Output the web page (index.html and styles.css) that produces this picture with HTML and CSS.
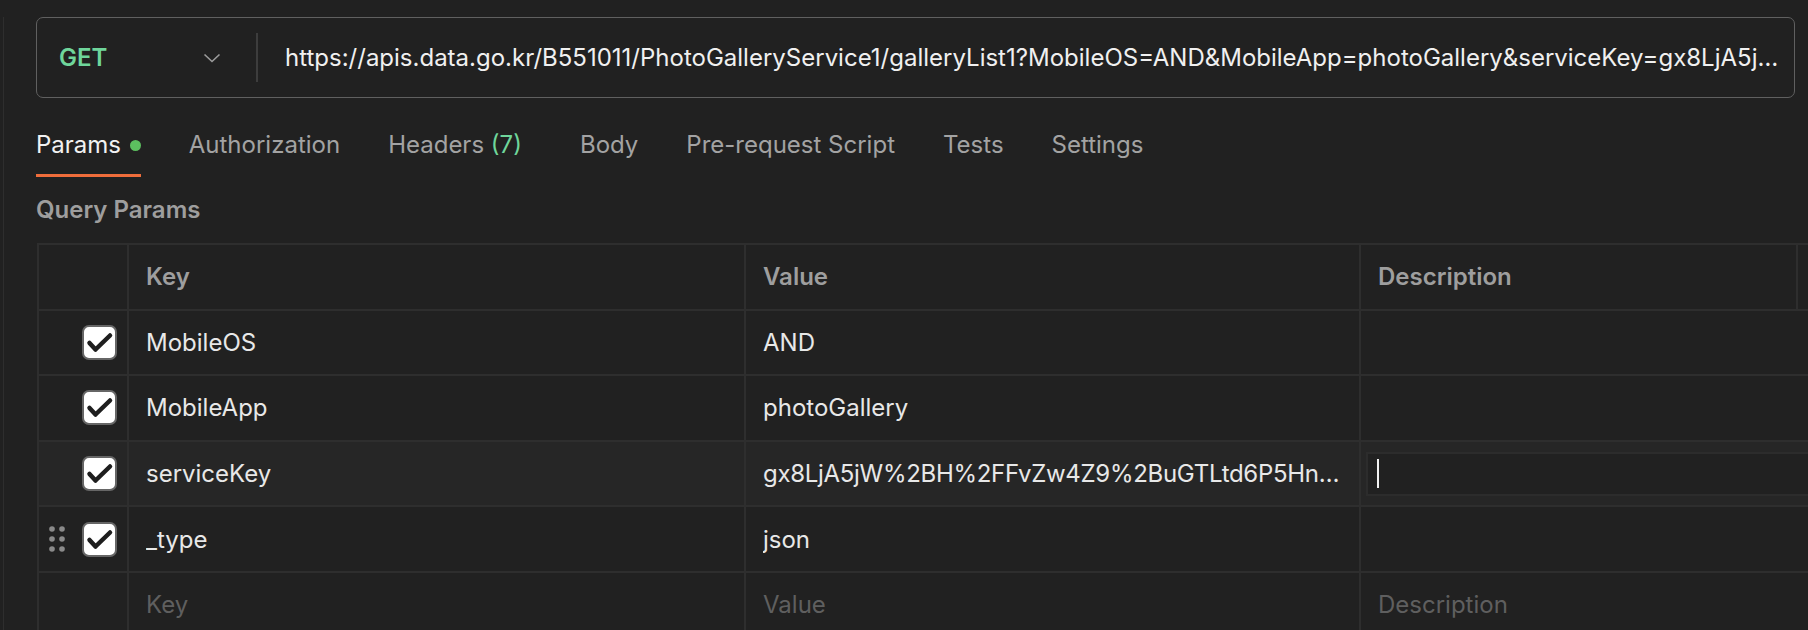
FILE: index.html
```html
<!DOCTYPE html>
<html>
    <head>
        <meta charset="UTF-8">
        <meta name="viewport" content="width=device-width, initial-scale=1.0">
        <title>Request - Params</title>
        <link rel="stylesheet" href="styles.css">
    </head>

    <body>
        <div class="pane">
            <!-- method + url -->
            <div class="url-bar">
                <div class="method">
                    <span class="method-name">GET</span>
                    <svg class="chevron" width="18" height="10" viewBox="0 0 18 10">
                        <polyline points="1.5,1.5 9,8.5 16.5,1.5" fill="none" stroke="#9c9c9c" stroke-width="1.6"/>
                    </svg>
                </div>
                <div class="url-divider"></div>
                <div class="url-text">https://apis.data.go.kr/B551011/PhotoGalleryService1/galleryList1?MobileOS=AND&amp;MobileApp=photoGallery&amp;serviceKey=gx8LjA5jW%2BH%2FFvZw4Z9%2BuGTLtd6P5HnQ2cX%2B1rKkT0a&amp;_type=json</div>
            </div>

            <ul class="tabs">
                <li class="tab on">Params <span class="dot"></span></li>
                <li class="tab">Authorization</li>
                <li class="tab tab-headers">Headers <span class="count">(7)</span></li>
                <li class="tab">Body</li>
                <li class="tab">Pre-request Script</li>
                <li class="tab">Tests</li>
                <li class="tab">Settings</li>
            </ul>

            <div class="section-title">Query Params</div>

            <div class="params-table">
                <div class="row head">
                    <div class="cell check-cell"></div>
                    <div class="cell">Key</div>
                    <div class="cell">Value</div>
                    <div class="cell">Description</div>
                    <div class="cell"></div>
                </div>

                <div class="row">
                    <div class="cell check-cell">
                        <svg class="checkbox" width="35" height="35" viewBox="0 0 35 35"><rect x="1" y="1" width="33" height="33" rx="6" fill="#fff" stroke="#666" stroke-width="2"/><polyline points="7.5,18 13.5,24.5 28,10.5" fill="none" stroke="#1e1e1e" stroke-width="4.5" stroke-linecap="round" stroke-linejoin="round"/></svg>
                    </div>
                    <div class="cell"><span class="text">MobileOS</span></div>
                    <div class="cell"><span class="text">AND</span></div>
                    <div class="cell desc"></div>
                </div>

                <div class="row">
                    <div class="cell check-cell">
                        <svg class="checkbox" width="35" height="35" viewBox="0 0 35 35"><rect x="1" y="1" width="33" height="33" rx="6" fill="#fff" stroke="#666" stroke-width="2"/><polyline points="7.5,18 13.5,24.5 28,10.5" fill="none" stroke="#1e1e1e" stroke-width="4.5" stroke-linecap="round" stroke-linejoin="round"/></svg>
                    </div>
                    <div class="cell"><span class="text">MobileApp</span></div>
                    <div class="cell"><span class="text">photoGallery</span></div>
                    <div class="cell desc"></div>
                </div>

                <!-- row being edited -->
                <div class="row active">
                    <div class="cell check-cell">
                        <svg class="checkbox" width="35" height="35" viewBox="0 0 35 35"><rect x="1" y="1" width="33" height="33" rx="6" fill="#fff" stroke="#666" stroke-width="2"/><polyline points="7.5,18 13.5,24.5 28,10.5" fill="none" stroke="#1e1e1e" stroke-width="4.5" stroke-linecap="round" stroke-linejoin="round"/></svg>
                    </div>
                    <div class="cell"><span class="text">serviceKey</span></div>
                    <div class="cell"><span class="text long-value">gx8LjA5jW%2BH%2FFvZw4Z9%2BuGTLtd6P5HnQ2cX%2B1rKkT0a</span></div>
                    <div class="cell desc desc-edit">
                        <div class="desc-input"><span class="caret"></span></div>
                    </div>
                </div>

                <div class="row">
                    <div class="cell check-cell">
                        <svg class="drag" width="16" height="26" viewBox="0 0 16 26"><circle cx="3" cy="3" r="2.8" fill="#8a8a8a"/><circle cx="13" cy="3" r="2.8" fill="#8a8a8a"/><circle cx="3" cy="13" r="2.8" fill="#8a8a8a"/><circle cx="13" cy="13" r="2.8" fill="#8a8a8a"/><circle cx="3" cy="23" r="2.8" fill="#8a8a8a"/><circle cx="13" cy="23" r="2.8" fill="#8a8a8a"/></svg>
                        <svg class="checkbox" width="35" height="35" viewBox="0 0 35 35"><rect x="1" y="1" width="33" height="33" rx="6" fill="#fff" stroke="#666" stroke-width="2"/><polyline points="7.5,18 13.5,24.5 28,10.5" fill="none" stroke="#1e1e1e" stroke-width="4.5" stroke-linecap="round" stroke-linejoin="round"/></svg>
                    </div>
                    <div class="cell"><span class="text">_type</span></div>
                    <div class="cell"><span class="text">json</span></div>
                    <div class="cell desc"></div>
                </div>

                <!-- empty row for a new param -->
                <div class="row">
                    <div class="cell check-cell"></div>
                    <div class="cell placeholder">Key</div>
                    <div class="cell placeholder">Value</div>
                    <div class="cell desc placeholder">Description</div>
                </div>
            </div>
        </div>
    </body>
</html>
```

FILE: styles.css
```css
html{
    height: 100%;
}
body{
    margin: 0;
    height: 100%;
    background-color: #212121;
    color: #e8e8e8;
    font-family: Inter, "Noto Sans", sans-serif;
    font-size: 24px;
    overflow: hidden;
}
.pane{
    margin-left: 3px;
    border-left: 1px solid #2e2e2e;
    padding-left: 32px;
    height: 100%;
}

/* url bar */
.url-bar{
    display: flex;
    align-items: center;
    box-sizing: border-box;
    width: 1759px;
    height: 81px;
    margin-top: 17px;
    border: 1px solid #606060;
    border-radius: 7px;
}
.method{
    display: flex;
    align-items: center;
    width: 162px;
    padding-left: 22px;
    padding-right: 35px;
}
.method-name{
    color: #6fd69b;
    font-weight: 600;
}
.chevron{
    margin-left: auto;
}
.url-divider{
    width: 2px;
    height: 49px;
    background-color: #3d3d3d;
}
.url-text{
    flex: 1;
    padding-left: 27px;
    padding-right: 10px;
    white-space: nowrap;
    overflow: hidden;
    text-overflow: ellipsis;
    color: #f0f0f0;
}

/* tabs */
.tabs{
    display: flex;
    gap: 48px;
    margin: 33px 0 0 0;
    padding: 0;
    list-style: none;
}
.tab{
    display: flex;
    align-items: center;
    line-height: 28px;
    padding-bottom: 15px;
    border-bottom: 3px solid transparent;
    color: #a3a3a3;
    white-space: pre;
}
.tab.on{
    color: #f2f2f2;
    border-bottom-color: #ef6d3b;
}
.tab-headers{
    margin-right: 10px;
}
.dot{
    width: 11px;
    height: 11px;
    margin-left: 2px;
    border-radius: 50%;
    background-color: #5cbf5f;
}
.count{
    color: #6fd69b;
}

.section-title{
    margin-top: 19px;
    line-height: 28px;
    font-weight: 600;
    color: #9e9e9e;
}

/* params table */
.params-table{
    margin-top: 19px;
    margin-left: 1px;
    border-top: 2px solid #2e2e2e;
    border-left: 2px solid #2e2e2e;
    width: 1800px;
}
.row{
    display: grid;
    grid-template-columns: 90px 617px 615px 437px 1fr;
    height: 65.6px;
    box-sizing: border-box;
    border-bottom: 2px solid #2e2e2e;
}
.row.active{
    background-color: #262626;
}
.cell{
    display: flex;
    align-items: center;
    box-sizing: border-box;
    padding: 0 6px 0 17px;
    border-right: 2px solid #2e2e2e;
    white-space: nowrap;
    overflow: hidden;
}
.head .cell{
    font-weight: 600;
    color: #9e9e9e;
}
.text{
    overflow: hidden;
    text-overflow: ellipsis;
}
.long-value{
    letter-spacing: -0.3px;
    padding-right: 12px;
}
.check-cell{
    justify-content: flex-end;
    gap: 17px;
    padding: 0 10px 0 0;
}
.desc{
    grid-column: span 2;
    border-right: none;
}
.desc-edit{
    padding: 0 0 0 5px;
}
.desc-input{
    display: flex;
    align-items: center;
    box-sizing: border-box;
    width: 100%;
    height: 44px;
    padding-left: 9px;
    background-color: #212121;
    border: 2px solid #2c2c2c;
    border-right: none;
}
.caret{
    width: 2px;
    height: 29px;
    background-color: #f2f2f2;
}
.placeholder{
    color: #5f5f5f;
}
```
